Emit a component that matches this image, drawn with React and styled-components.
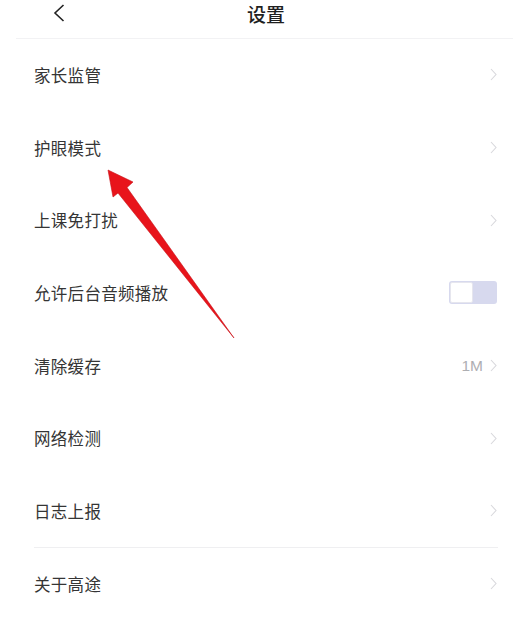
import React from "react";
import styled, { createGlobalStyle } from "styled-components";

const Global = createGlobalStyle`
  html, body { margin: 0; padding: 0; background: #ffffff; }
  body { font-family: "Noto Sans CJK SC", "Noto Sans", sans-serif; }
  * { box-sizing: border-box; }
`;

const Page = styled.div`
  position: relative;
  width: 513px;
  height: 631px;
  background: #ffffff;
  overflow: hidden;
`;

const Header = styled.div`
  display: flex;
  align-items: center;
  height: 39px;
  padding: 0 46px 12px 37px;
  margin-left: 16px;
  border-bottom: 1.5px solid #f2f2f4;
`;

const BackButton = styled.div`
  width: 12px;
  height: 27px;
  display: flex;
  align-items: center;
  justify-content: center;
`;

const Title = styled.div`
  flex: 1;
  text-align: center;
  font-size: 19px;
  font-weight: 500;
  color: #1f1f1f;
  line-height: 27px;
`;

const List = styled.div`
  display: flex;
  flex-direction: column;
  padding: 0 15px 0 34px;
`;

const Row = styled.div`
  display: flex;
  align-items: center;
  justify-content: space-between;
  height: 72.7px;
  border-bottom: ${(p) => (p.$divider ? "1px solid #efeff1" : "1px solid transparent")};
`;

const Label = styled.span`
  font-size: 16.5px;
  color: #353535;
  letter-spacing: 0.3px;
`;

const Right = styled.div`
  display: flex;
  align-items: center;
  gap: 6px;
`;

const Value = styled.span`
  font-family: "Liberation Sans", "Noto Sans", sans-serif;
  font-size: 15.5px;
  color: #aeaeb2;
`;

const Toggle = styled.div`
  display: flex;
  width: 48px;
  height: 23px;
  border-radius: 3px;
  background: #d7d9ee;
  padding: 1px;
  margin-right: 1px;
`;

const Knob = styled.div`
  width: 23px;
  height: 21px;
  background: #ffffff;
  border-radius: 2px;
  border: 1px solid #e6e6ee;
`;

const ArrowOverlay = styled.svg`
  position: absolute;
  left: 0;
  top: 0;
  pointer-events: none;
`;

const Chevron = () => (
  <svg width="9" height="13" viewBox="0 0 9 13">
    <polyline points="2,1 7,6.5 2,12" fill="none" stroke="#d8d8dc" strokeWidth="1.1" />
  </svg>
);

const items = [
  { label: "家长监管" },
  { label: "护眼模式" },
  { label: "上课免打扰" },
  { label: "允许后台音频播放", toggle: true },
  { label: "清除缓存", value: "1M" },
  { label: "网络检测" },
  { label: "日志上报", divider: true },
  { label: "关于高途" },
];

export default function App() {
  return (
    <Page>
      <Global />
      <Header>
        <BackButton>
          <svg width="12" height="18" viewBox="0 0 12 18">
            <polyline points="10.5,1 2,9 10.5,17" fill="none" stroke="#222" strokeWidth="1.6" />
          </svg>
        </BackButton>
        <Title>设置</Title>
      </Header>
      <List>
        {items.map((it) => (
          <Row key={it.label} $divider={it.divider}>
            <Label>{it.label}</Label>
            <Right>
              {it.value && <Value>{it.value}</Value>}
              {it.toggle ? (
                <Toggle>
                  <Knob />
                </Toggle>
              ) : (
                <Chevron />
              )}
            </Right>
          </Row>
        ))}
      </List>
      <ArrowOverlay width="513" height="631" viewBox="0 0 513 631">
        <polygon
          points="108,170 133,182 127,187.5 234,338 118,193 113,197"
          fill="#e8141b"
          stroke="#c70f15"
          strokeWidth="0.6"
          strokeLinejoin="round"
        />
      </ArrowOverlay>
    </Page>
  );
}
